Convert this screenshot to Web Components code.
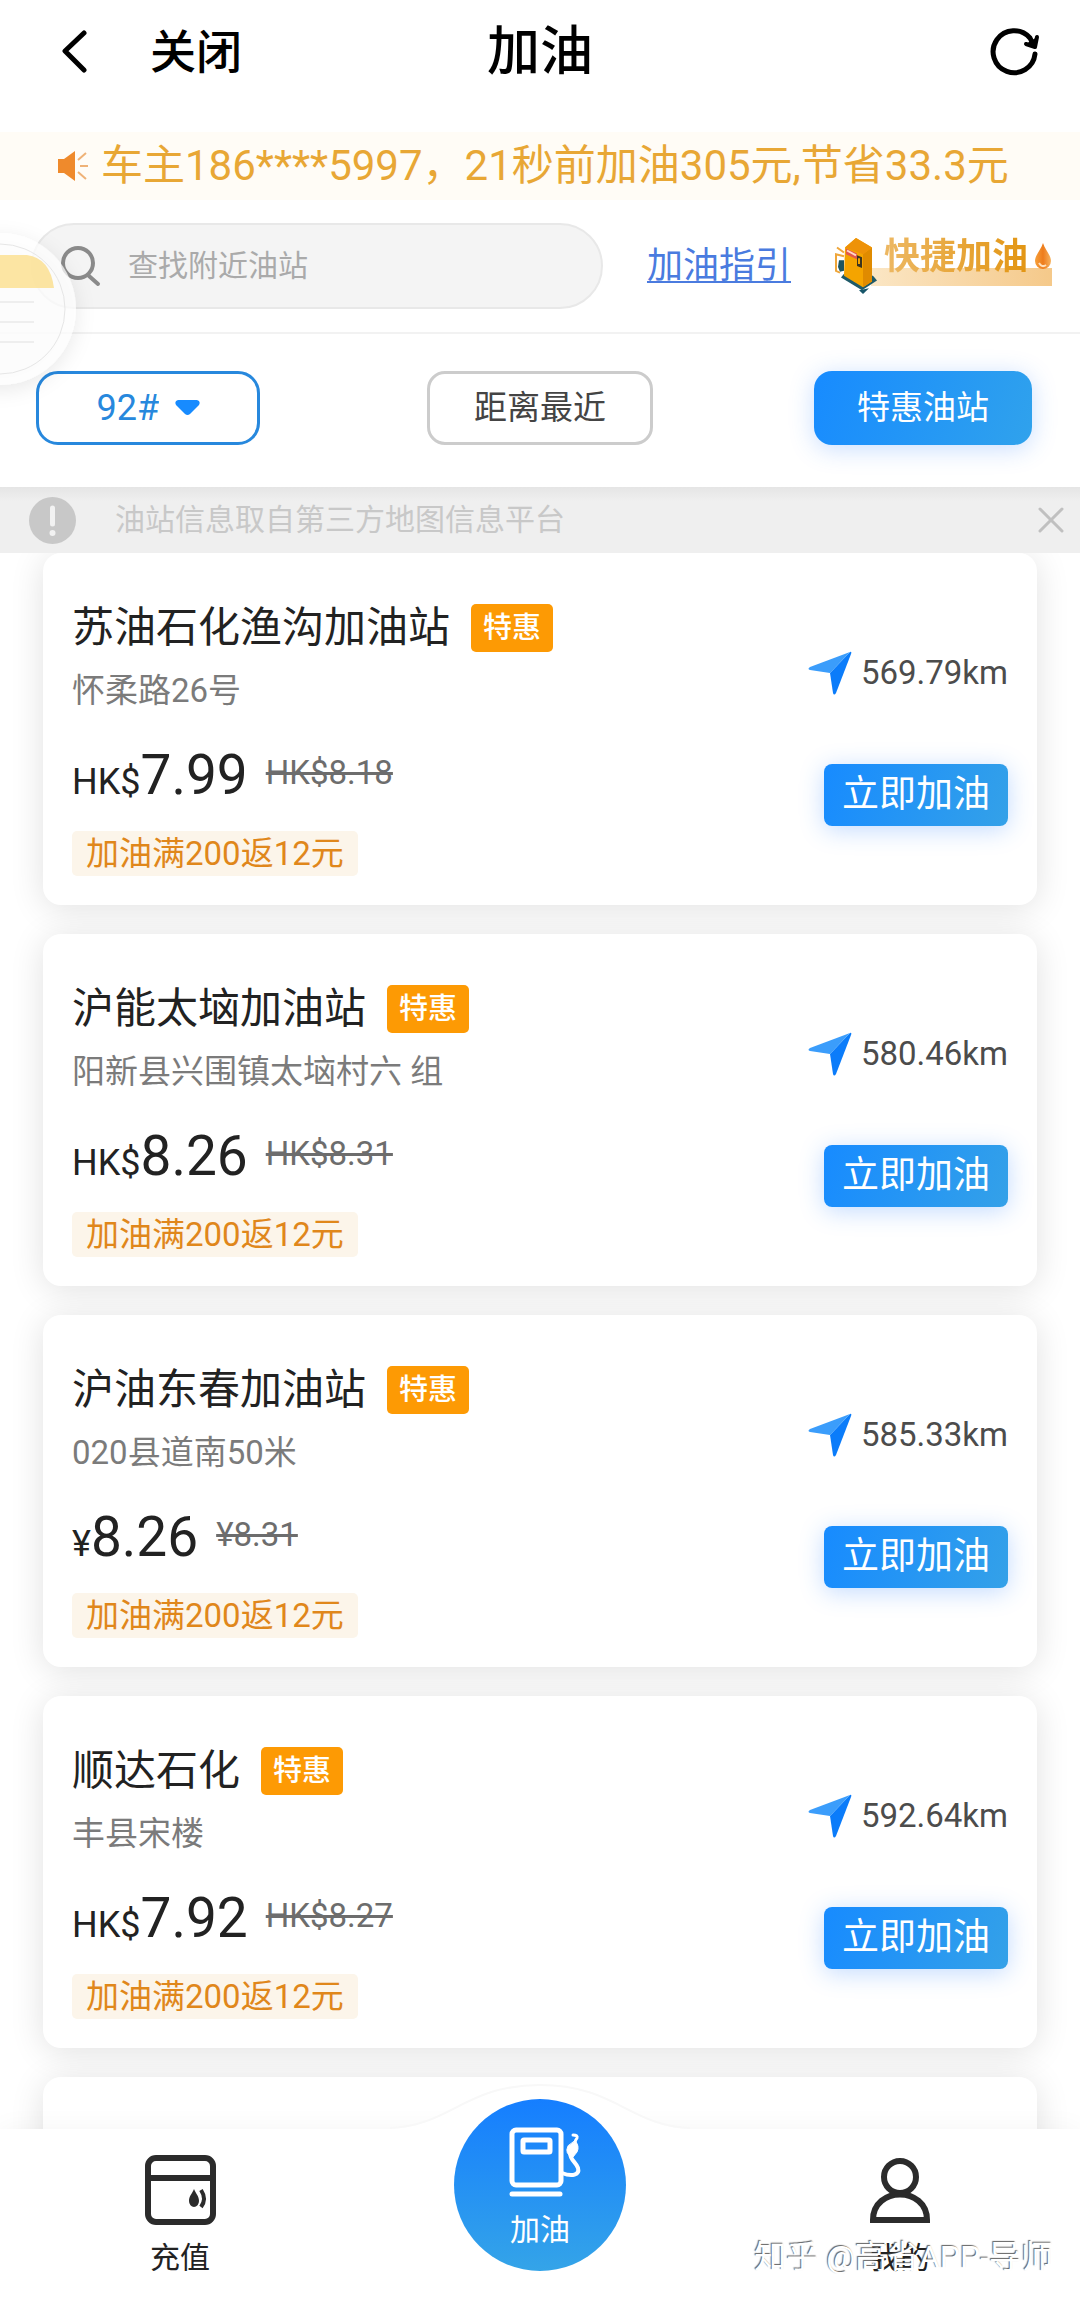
<!DOCTYPE html>
<html lang="zh-CN">
<head>
<meta charset="utf-8">
<meta name="viewport" content="width=device-width, initial-scale=1">
<title>加油</title>
<style>
  html, body { margin: 0; height: 100%; background: #fff; }
  body { font-family: Roboto, "Noto Sans CJK SC", sans-serif; color: #222; }
</style>
</head>
<body>
<fuel-app></fuel-app>

<script>
const define = (name, html, setup) => {
  const template = document.createElement('template');
  template.innerHTML = `<style>
    *, *::before { box-sizing: border-box; }
    button, input, select { font: inherit; color: inherit; margin: 0; padding: 0; border: 0; background: none; }
    a { color: inherit; text-decoration: none; }
    svg { display: block; flex: none; }
  </style>` + html;
  customElements.define(name, class extends HTMLElement {
    constructor() {
      super();
      this.attachShadow({ mode: 'open' }).append(template.content.cloneNode(true));
    }
    connectedCallback() { if (setup) setup(this, this.shadowRoot); }
  });
};

/* Title bar */
define('app-header', `
<style>
  :host { display: block; padding: 16px 40px 44px; color: #000; }
  header { display: grid; grid-template-columns: 1fr auto 1fr; align-items: center; height: 72px; }
  .left { display: flex; align-items: center; gap: 62px; padding-left: 20px; }
  .close { font-size: 46px; line-height: 60px; font-weight: 500; }
  h1 { margin: 0; font-size: 53px; line-height: 64px; font-weight: 500; }
  .reload { justify-self: end; }
</style>
<header>
  <div class="left">
    <button aria-label="返回"><svg width="28" height="44" viewBox="0 0 28 44" fill="none" stroke="#000" stroke-width="5" stroke-linecap="round" stroke-linejoin="round"><path d="M24 3 5 21 24 40"/></svg></button>
    <button class="close">关闭</button>
  </div>
  <h1>加油</h1>
  <button class="reload" aria-label="刷新"><svg width="50" height="50" viewBox="0 0 50 50" fill="none" stroke="#000" stroke-width="5" stroke-linecap="round" stroke-linejoin="round"><path d="M45 27A21 21 0 1 1 40 11L43 17"/><path d="M47 10 45 20 36 17" fill="#000" stroke-width="4"/></svg></button>
</header>`);

define('promo-ticker', `
<style>
  :host { display: flex; align-items: center; gap: 11px; height: 68px; padding: 0 56px; background: #fffcf6; color: #e8a735; font-size: 42px; line-height: 64px; white-space: nowrap; }
</style>
<svg width="34" height="34" viewBox="0 0 34 34"><path d="M2 10h6L19 2v30L8 24H2z" fill="#ef8a2c"/><path d="M22 11 30 4M24 17h8M22 23l8 7" stroke="#efb277" stroke-width="2" fill="none"/></svg>
<span><slot></slot></span>`);

/* Search box and shortcuts */
define('quick-fuel', `
<style>
  :host { display: block; }
  a { display: flex; align-items: flex-start; width: 217px; height: 62px; background: linear-gradient(90deg, #fbe6c4, #f5c98a) 100% 33px / 181px 18px no-repeat; border-radius: 0 0 8px 0; }
  span { flex: 1; margin-left: 7px; font-size: 36px; line-height: 44px; font-weight: 700; white-space: nowrap; color: transparent; background: linear-gradient(90deg, #edb863, #e29410); -webkit-background-clip: text; background-clip: text; }
  .drop { margin-top: 8px; }
</style>
<a href="#quick">
  <svg width="42" height="60" viewBox="0 0 42 62" preserveAspectRatio="none">
    <path d="M6 44 27 57 42 47 38 42 9 40z" fill="#1f5a68"/>
    <path d="M24 57 28 61 34 55z" fill="#17566a"/>
    <path d="M10 13 21 3 37 13V48L28 54 9 42z" fill="#f5a400"/>
    <path d="M28 20 37 13V48L28 54z" fill="#e08b00"/>
    <path d="M10 13 21 3 37 13 28 20z" fill="#ee9208"/>
    <path d="M11 14 22 19V25L11 20z" fill="#e2574c"/><path d="M12 16 21 21" stroke="#ffd9c9" stroke-width="2"/>
    <path d="M22 21 27 23V34L22 32z" fill="#3b3420"/><path d="M24 24v6" stroke="#f5a400" stroke-width="2"/>
    <path d="M9 18 2 13M9 22 1 20v17l4 2" fill="none" stroke="#efa63a" stroke-width="2"/>
    <path d="M4 26h5v11l-4 1-2-5z" fill="#1d5560"/>
  </svg>
  <span>快捷加油</span>
  <svg class="drop" width="18" height="27" viewBox="0 0 18 27"><defs><linearGradient id="d" x1="0" x2="1"><stop stop-color="#f6a03a"/><stop offset=".5" stop-color="#ee7c1c"/><stop offset="1" stop-color="#f6b25e"/></linearGradient></defs><path d="M9 0C11 7 17 12 17 18A8 8 0 0 1 1 18C1 12 7 7 9 0z" fill="url(#d)"/><path d="M5 20q3 5 7 2" stroke="#ffe0bb" stroke-width="2" fill="none"/></svg>
</a>`);

define('search-row', `
<style>
  :host { display: flex; align-items: center; gap: 44px; padding: 23px 28px 23px 31px; border-bottom: 2px solid #f2f2f2; }
  label { flex: 1; min-width: 0; display: flex; align-items: center; gap: 27px; height: 86px; padding: 0 28px; border: 2px solid #e8e8e8; border-radius: 43px; background: #f4f4f4; }
  input { flex: 1; min-width: 0; height: 48px; font-size: 30px; line-height: 48px; outline: none; color: #444; }
  input::placeholder { color: #aaa; opacity: 1; }
  .guide { font-size: 36px; line-height: 44px; color: #4a7bdf; text-decoration: underline; text-decoration-thickness: 2px; text-underline-offset: 3px; }
</style>
<label><svg width="40" height="42" viewBox="0 0 40 42" fill="none" stroke="#8a8a8a" stroke-width="4" stroke-linecap="round"><circle cx="17" cy="18" r="15"/><path d="m28 31 9 8"/></svg><input type="search" aria-label="查找附近油站" placeholder="查找附近油站"></label>
<a class="guide" href="#guide">加油指引</a>
<quick-fuel></quick-fuel>`);

/* Fuel grade, sort order and offer filters */
define('filter-row', `
<style>
  :host { display: grid; grid-template-columns: repeat(3, 1fr); padding: 37px 0 42px; }
  .grade, button { display: flex; align-items: center; justify-content: center; height: 74px; font-size: 33px; line-height: 44px; border-radius: 18px; white-space: nowrap; }
  .grade { justify-self: start; margin-left: 36px; width: 224px; gap: 16px; border: 3px solid #2788dd; color: #2788dd; font-size: 36px; border-radius: 22px; }
  select { appearance: none; width: 62px; outline: none; }
  .sort { justify-self: center; width: 226px; border: 3px solid #ccc; color: #444; }
  .offer { justify-self: end; margin-right: 48px; width: 218px; color: #fff; background: linear-gradient(110deg, #178bff, #30a2ec); box-shadow: 0 4px 24px rgba(40, 125, 255, .25); }
</style>
<label class="grade"><select aria-label="油号"><option>92#</option><option>95#</option><option>98#</option></select><svg width="25" height="16" viewBox="0 0 25 16"><path d="M3 0h19q4 1 2 5L15 14q-2.500 2-5 0L1 5Q-1 1 3 0z" fill="#178bff"/></svg></label>
<button class="sort">距离最近</button>
<button class="offer">特惠油站</button>`);

/* Data source hint */
define('info-bar', `
<style>
  :host { display: flex; align-items: center; height: 66px; padding: 0 15px 0 29px; background: linear-gradient(#e5e5e5, #efefef 14px); color: #c8c8c8; font-size: 30px; line-height: 44px; }
  p { flex: 1; margin: 0 0 0 39px; }
</style>
<svg width="47" height="47" viewBox="0 0 47 47"><circle cx="23.500" cy="23.500" r="23.500" fill="#c8c8c8"/><path d="M23.500 11v16" stroke="#f2f2f2" stroke-width="5" stroke-linecap="round"/><circle cx="23.500" cy="36" r="3" fill="#f2f2f2"/></svg>
<p><slot></slot></p>
<button aria-label="关闭提示"><svg width="28" height="28" viewBox="0 0 28 28" stroke="#c0c0c0" stroke-width="3" stroke-linecap="round"><path d="m3 3 22 22M25 3 3 25"/></svg></button>`);

/* One petrol station */
define('station-card', `
<style>
  :host { display: block; }
  article { display: flex; justify-content: space-between; min-height: 352px; padding: 50px 29px 29px; border-radius: 18px; background: #fff; box-shadow: 0 4px 34px rgba(0, 0, 0, .12); }
  .name { display: flex; align-items: center; gap: 21px; }
  h2 { margin: 0; font-size: 42px; line-height: 50px; font-weight: 400; color: #222; }
  .tag { padding: 0 12px; border-radius: 5px; background: #fd9a04; color: #fff; font-size: 29px; line-height: 48px; font-weight: 500; }
  .address { margin: 18px 0 0; font-size: 33px; line-height: 40px; color: #7b7b7b; }
  .price { display: flex; align-items: flex-start; gap: 18px; margin: 34px 0 26px; height: 60px; }
  .now { font-size: 55px; line-height: 60px; color: #222; }
  .now small { font-size: 36px; }
  s { font-size: 33px; line-height: 56px; color: #6d6d6d; }
  .promo { display: block; width: fit-content; padding: 0 14px; border-radius: 5px; background: #fcf5ea; color: #e0871b; font-size: 33px; line-height: 45px; }
  .side { display: flex; flex-direction: column; align-items: flex-end; gap: 69px; padding-top: 48px; }
  .distance { display: flex; align-items: center; gap: 9px; font-size: 33px; line-height: 44px; color: #4c4c4c; }
  button { height: 62px; padding: 0 18px; border-radius: 8px; color: #fff; font-size: 37px; line-height: 62px; background: linear-gradient(110deg, #178bff, #34a1e8); box-shadow: 0 4px 24px rgba(40, 125, 255, .28); }
  :host([pending]) article > * { display: none; }
</style>
<article>
  <div>
    <div class="name"><h2></h2><span class="tag">特惠</span></div>
    <p class="address"></p>
    <div class="price"><span class="now"><small></small><span class="amount"></span></span><s></s></div>
    <span class="promo">加油满200返12元</span>
  </div>
  <div class="side">
    <span class="distance"><svg width="44" height="44" viewBox="0 0 44 44"><path d="M42 1Q44 0 43 3L28 42Q26 45 25 42L22 22z" fill="#0b7cfa"/><path d="M42 1 2 16Q-1 18 2 19L22 22z" fill="#3b9dfb"/></svg><span class="km"></span></span>
    <button>立即加油</button>
  </div>
</article>`, (el, root) => {
  if (el.hasAttribute('pending')) return;
  const get = key => el.getAttribute(key);
  root.querySelector('h2').textContent = get('name');
  root.querySelector('.address').textContent = get('address');
  root.querySelector('small').textContent = get('currency');
  root.querySelector('.amount').textContent = get('price');
  root.querySelector('s').textContent = get('currency') + get('was');
  root.querySelector('.km').textContent = get('distance') + 'km';
});

define('station-list', `
<style>
  :host { display: flex; flex-direction: column; gap: 29px; padding: 0 43px; overflow: hidden; }
  ::slotted(*) { flex: none; }
</style>
<slot></slot>`);

/* Bottom navigation */
define('tab-bar', `
<style>
  :host { display: block; position: relative; background: #fff; box-shadow: 0 -2px 24px rgba(0, 0, 0, .04); }
  .hump { position: absolute; left: 50%; bottom: 100%; margin-left: -150px; }
  nav { position: relative; display: grid; grid-template-columns: repeat(3, 1fr); justify-items: center; height: 171px; }
  a { display: flex; flex-direction: column; align-items: center; gap: 15px; padding-top: 26px; font-size: 30px; line-height: 36px; color: #222; }
  .fuel { width: 172px; height: 172px; margin-top: -30px; padding-top: 28px; border-radius: 50%; color: #fff; background: linear-gradient(#157eff, #34a4e8); }
</style>
<svg class="hump" width="300" height="45" viewBox="0 0 300 45"><path d="M0 45C60 43 75 1 150 1S240 43 300 45z" fill="#fff"/><path d="M0 44C60 42 75 1 150 1S240 42 300 44" fill="none" stroke="#f8f8f8" stroke-width="2"/></svg>
<nav>
  <a href="#recharge">
    <svg width="72" height="70" viewBox="0 0 72 70"><g fill="none" stroke="#2b2b2b" stroke-width="6"><rect x="4" y="3" width="65" height="64" rx="8"/><path d="M5 23h64"/></g><path d="M50 34C52 39 55 41 55 46a5 6 0 0 1-10 0c0-5 3-7 5-12z" fill="#2b2b2b"/><path d="M57 35q6 9 0 17" fill="none" stroke="#2b2b2b" stroke-width="4"/></svg>
    <span>充值</span>
  </a>
  <a class="fuel" href="#fuel">
    <svg width="64" height="70" viewBox="0 0 64 70" fill="none" stroke="#fff" stroke-width="5" stroke-linecap="round" stroke-linejoin="round" overflow="visible"><rect x="4" y="3" width="49" height="55" rx="4"/><rect x="15" y="13" width="27" height="12" rx="1"/><path d="M4 67h48"/><path d="M54 46C64 50 72 48 70 41 68 35 62 33 62 26" stroke-width="4"/><path d="M67 14Q72 19 69 25L65 30Q56 27 60 19z" fill="#fff" stroke-width="1"/><path d="M65 8q5 0 4 3-2 2-2 6" stroke-width="3"/></svg>
    <span>加油</span>
  </a>
  <a href="#mine">
    <svg width="62" height="70" viewBox="0 0 62 70" fill="none" stroke="#2b2b2b" stroke-width="6"><circle cx="31" cy="22" r="16"/><path d="M4 65C4 31 58 31 58 65z"/></svg>
    <span>我的</span>
  </a>
</nav>`);

define('float-note', `
<style>
  :host { position: absolute; left: -80px; top: 230px; }
</style>
<svg width="158" height="158" viewBox="0 0 158 158" overflow="visible"><defs><filter id="s" x="-30%" y="-30%" width="160%" height="160%"><feDropShadow dx="0" dy="5" stdDeviation="10" flood-opacity=".12"/></filter></defs>
  <circle cx="80" cy="79" r="76" fill="#fff" fill-opacity=".72" filter="url(#s)"/>
  <circle cx="80" cy="79" r="65" fill="#fff" fill-opacity=".2" stroke="#e6e6e6"/>
  <path d="M24 58V40Q24 25 40 25H107Q130 28 134 58z" fill="#fbdf8c" fill-opacity=".8"/>
  <path d="M40 72h74M40 92h74M40 112h74" stroke="#eee" stroke-width="2"/>
</svg>`);

define('photo-credit', `
<style>
  :host { position: absolute; right: 27px; bottom: 21px; font-size: 32px; line-height: 44px; color: #fff; text-shadow: -1px -1px 1px rgba(70, 70, 70, .85); white-space: nowrap; pointer-events: none; }
</style>
<slot></slot>`);

define('fuel-app', `
<style>
  :host { display: flex; flex-direction: column; position: relative; height: 100vh; overflow: hidden; }
  station-list { flex: 1; min-height: 0; }
</style>
<app-header></app-header>
<promo-ticker>车主186****5997，21秒前加油305元,节省33.3元</promo-ticker>
<search-row></search-row>
<filter-row></filter-row>
<info-bar>油站信息取自第三方地图信息平台</info-bar>
<station-list>
  <station-card name="苏油石化渔沟加油站" address="怀柔路26号" currency="HK$" price="7.99" was="8.18" distance="569.79"></station-card>
  <station-card name="沪能太垴加油站" address="阳新县兴围镇太垴村六 组" currency="HK$" price="8.26" was="8.31" distance="580.46"></station-card>
  <station-card name="沪油东春加油站" address="020县道南50米" currency="¥" price="8.26" was="8.31" distance="585.33"></station-card>
  <station-card name="顺达石化" address="丰县宋楼" currency="HK$" price="7.92" was="8.27" distance="592.64"></station-card>
  <station-card pending></station-card>
</station-list>
<tab-bar></tab-bar>
<float-note></float-note>
<photo-credit>知乎 @高省APP-导师</photo-credit>`);
</script>
</body>
</html>
